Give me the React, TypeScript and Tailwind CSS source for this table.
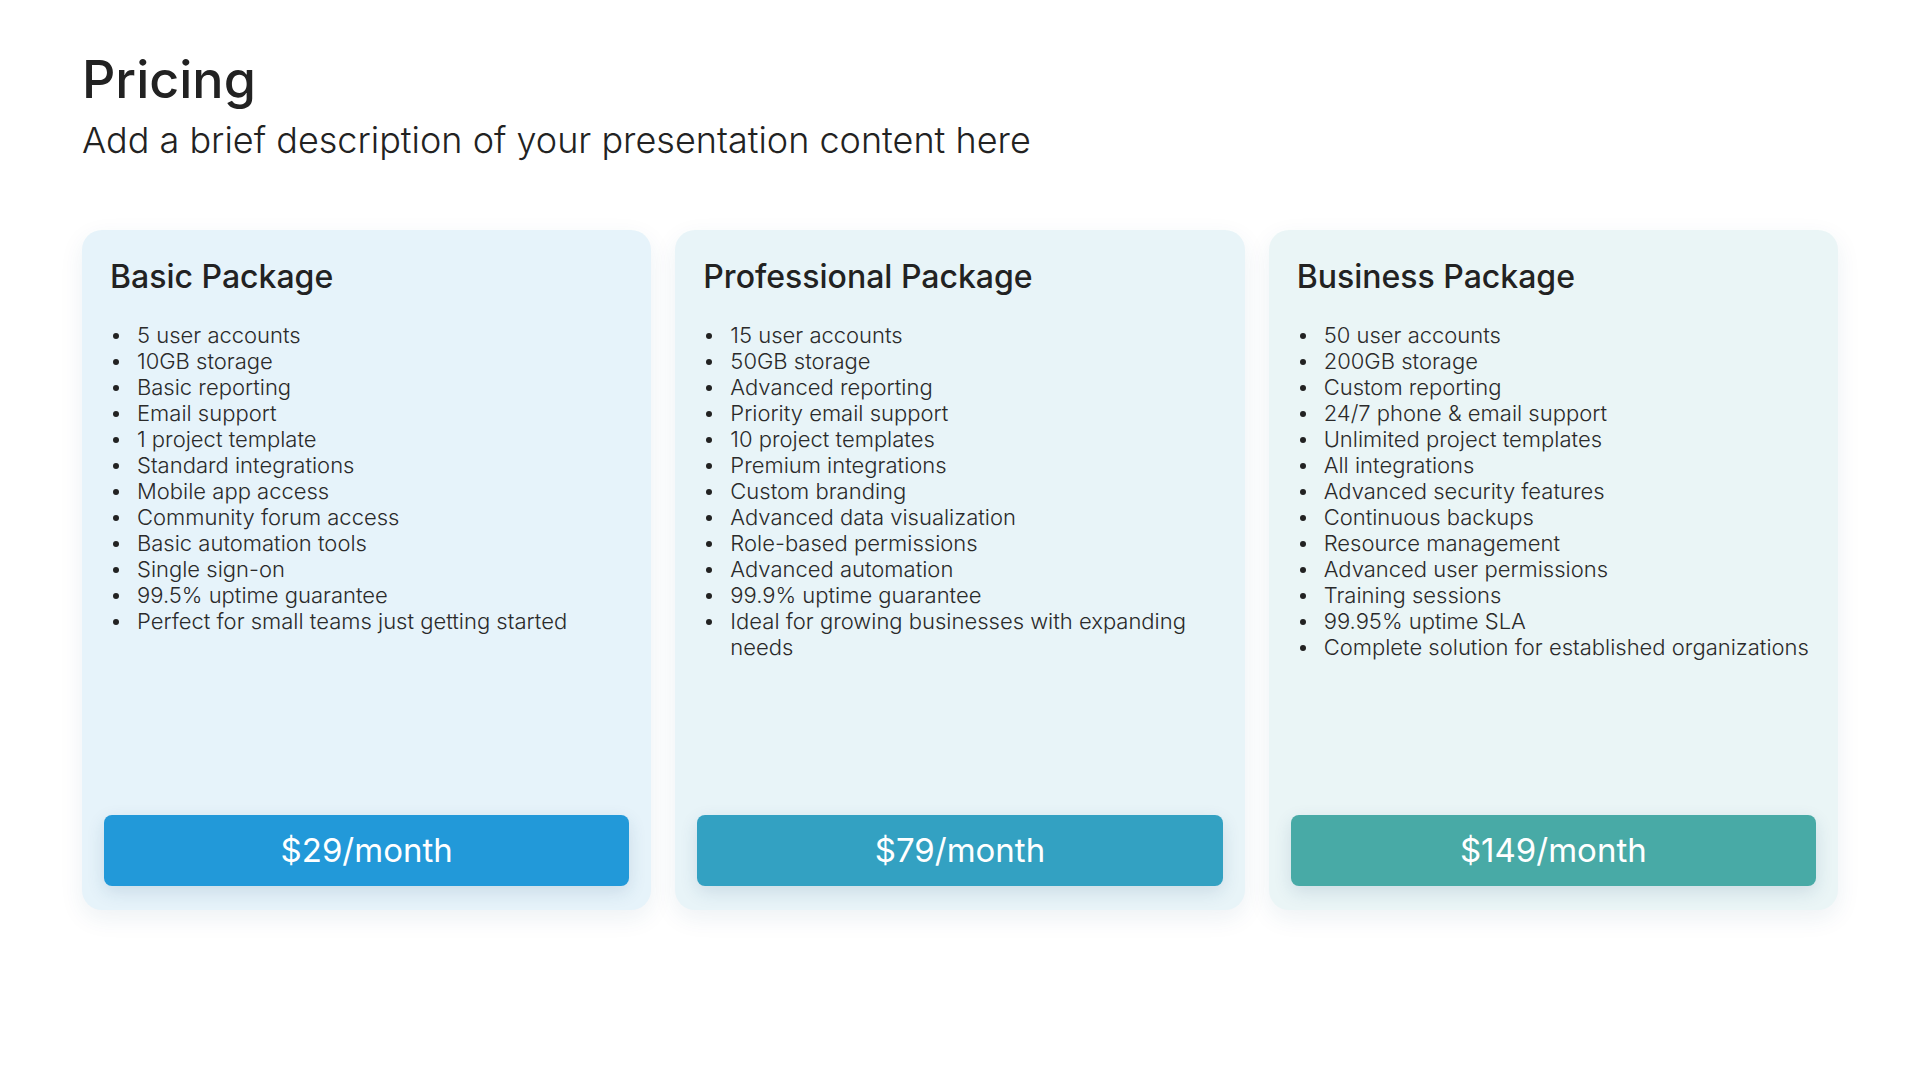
import React from 'react';

type Plan = {
  name: string;
  features: string[];
  price: string;
  cardBg: string;
  buttonBg: string;
};

const plans: Plan[] = [
  {
    name: 'Basic Package',
    features: [
      '5 user accounts',
      '10GB storage',
      'Basic reporting',
      'Email support',
      '1 project template',
      'Standard integrations',
      'Mobile app access',
      'Community forum access',
      'Basic automation tools',
      'Single sign-on',
      '99.5% uptime guarantee',
      'Perfect for small teams just getting started',
    ],
    price: '$29/month',
    cardBg: 'bg-[#e6f3fa]',
    buttonBg: 'bg-[#2299d9]',
  },
  {
    name: 'Professional Package',
    features: [
      '15 user accounts',
      '50GB storage',
      'Advanced reporting',
      'Priority email support',
      '10 project templates',
      'Premium integrations',
      'Custom branding',
      'Advanced data visualization',
      'Role-based permissions',
      'Advanced automation',
      '99.9% uptime guarantee',
      'Ideal for growing businesses with expanding needs',
    ],
    price: '$79/month',
    cardBg: 'bg-[#e8f4f8]',
    buttonBg: 'bg-[#33a1c2]',
  },
  {
    name: 'Business Package',
    features: [
      '50 user accounts',
      '200GB storage',
      'Custom reporting',
      '24/7 phone & email support',
      'Unlimited project templates',
      'All integrations',
      'Advanced security features',
      'Continuous backups',
      'Resource management',
      'Advanced user permissions',
      'Training sessions',
      '99.95% uptime SLA',
      'Complete solution for established organizations',
    ],
    price: '$149/month',
    cardBg: 'bg-[#eaf5f6]',
    buttonBg: 'bg-[#48aaa6]',
  },
];

const PlanCard: React.FC<{ plan: Plan }> = ({ plan }) => (
  <div className={`flex flex-col h-[680px] rounded-[20px] p-[22px] pb-[24px] shadow-[0_8px_24px_rgba(30,80,120,0.08)] ${plan.cardBg}`}>
    <div className="flex-1 px-[6px] pt-[5px]">
      <h2 className="text-[32px] leading-[40px] font-medium text-[#222]">{plan.name}</h2>
      <ul className="mt-[25px] text-[22px] leading-[26px] font-light text-[#2a2a2a]">
        {plan.features.map((f) => (
          <li key={f} className="flex">
            <span className="w-[27px] shrink-0 flex items-start pt-[11px] pl-[3px]">
              <span className="w-[6px] h-[6px] rounded-full bg-[#222]" />
            </span>
            <span>{f}</span>
          </li>
        ))}
      </ul>
    </div>
    <div
      className={`h-[71px] rounded-[8px] flex items-center justify-center text-white text-[33px] font-normal shadow-[0_6px_18px_rgba(30,80,120,0.14)] ${plan.buttonBg}`}
    >
      {plan.price}
    </div>
  </div>
);

export default function App() {
  return (
    <div className="w-[1920px] h-[1080px] bg-white px-[82px] pt-[48px] font-['Inter','Noto_Sans',sans-serif]">
      <h1 className="text-[52px] leading-[64px] font-medium text-[#222]">Pricing</h1>
      <p className="mt-[6px] text-[36px] leading-[44px] font-light text-[#222]">
        Add a brief description of your presentation content here
      </p>
      <div className="mt-[68px] grid grid-cols-3 gap-[24px]">
        {plans.map((p) => (
          <PlanCard key={p.name} plan={p} />
        ))}
      </div>
    </div>
  );
}
